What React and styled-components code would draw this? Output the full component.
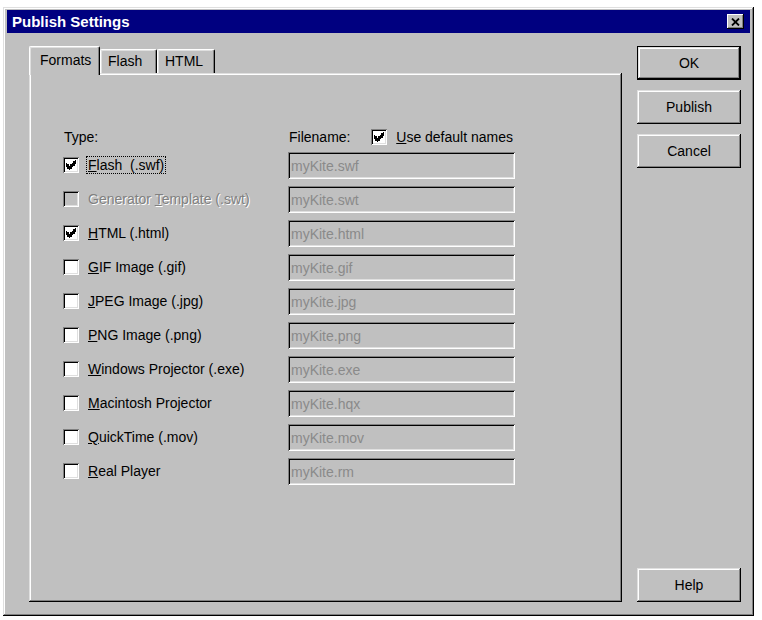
import React from "react";
import styled, { createGlobalStyle } from "styled-components";

const GlobalStyle = createGlobalStyle`
  html, body {
    margin: 0;
    background: #ffffff;
  }
  body {
    font-family: "Liberation Sans", Arial, sans-serif;
    font-size: 14px;
    color: #000;
  }
  #root {
    padding: 7px 0 0 3px;
  }
`;

const raised = `
  box-shadow: inset -1px -1px #000, inset 1px 1px #dfdfdf,
    inset -2px -2px #808080, inset 2px 2px #fff;
`;

const sunken = `
  box-shadow: inset 1px 1px #808080, inset -1px -1px #fff,
    inset 2px 2px #000, inset -2px -2px #dfdfdf;
`;

const Window = styled.div`
  width: 751px;
  height: 609px;
  box-sizing: border-box;
  padding: 3px 4px;
  background: #c0c0c0;
  display: flex;
  flex-direction: column;
  ${raised}
`;

const TitleBar = styled.div`
  height: 23px;
  background: #000080;
  color: #fff;
  display: flex;
  align-items: center;
  justify-content: space-between;
  padding: 0 6px 0 5px;
  font-weight: bold;
  font-size: 15px;
`;

const CloseButton = styled.button`
  width: 17px;
  height: 15px;
  padding: 0;
  border: none;
  background: #c0c0c0;
  display: flex;
  align-items: center;
  justify-content: center;
  box-shadow: inset -1px -1px #000, inset 1px 1px #fff, inset -2px -2px #808080;
`;

const Body = styled.div`
  flex: 1;
  display: flex;
  gap: 15px;
  padding: 13px 9px 11px 22px;
`;

const LeftColumn = styled.div`
  width: 593px;
  display: flex;
  flex-direction: column;
`;

const TabStrip = styled.div`
  height: 27px;
  display: flex;
  align-items: flex-end;
  position: relative;
  z-index: 1;
`;

const Tab = styled.div`
  box-sizing: border-box;
  width: ${(p) => p.$width}px;
  height: ${(p) => (p.$active ? "29px" : "24px")};
  margin-bottom: ${(p) => (p.$active ? "-2px" : "0")};
  padding: ${(p) => (p.$active ? "5px 0 0 10px" : "3px 0 0 7px")};
  background: #c0c0c0;
  border-top: 1px solid #fff;
  border-left: 1px solid #fff;
  border-right: 1px solid #000;
  border-radius: 2px 2px 0 0;
  box-shadow: inset -1px 0 #808080, inset 1px 1px #dfdfdf;
  font-size: 14px;
  line-height: 17px;
`;

const Panel = styled.div`
  flex: 1;
  box-sizing: border-box;
  padding: 53px 0 0 34px;
  ${raised}
`;

const FormatGrid = styled.div`
  display: grid;
  grid-template-columns: 225px 227px;
  grid-template-rows: 22px repeat(10, 34px);
  align-items: center;
`;

const HeaderCell = styled.div`
  display: flex;
  align-items: center;
  padding-left: 1px;
`;

const FilenameLabel = styled.span`
  width: 91px;
`;

const CheckRow = styled.div`
  display: flex;
  align-items: center;
  gap: 7px;
`;

const Box = styled.span`
  width: 16px;
  height: 16px;
  box-sizing: border-box;
  flex-shrink: 0;
  display: flex;
  align-items: center;
  justify-content: center;
  background: ${(p) => (p.$disabled ? "#c0c0c0" : "#fff")};
  ${sunken}
`;

const Label = styled.span`
  padding: 0 1px;
  line-height: 16px;
  border: 1px ${(p) => (p.$focused ? "dotted #000" : "solid transparent")};
  color: ${(p) => (p.$disabled ? "#808080" : "#000")};
  text-shadow: ${(p) => (p.$disabled ? "1px 1px #fff" : "none")};
  white-space: pre;
`;

const FileField = styled.input`
  width: 227px;
  height: 27px;
  box-sizing: border-box;
  margin: 0;
  border: none;
  padding: 2px 0 0 3px;
  background: #c0c0c0;
  font-family: "Liberation Sans", Arial, sans-serif;
  font-size: 14px;
  color: #8a8a8a;
  -webkit-text-fill-color: #8a8a8a;
  opacity: 1;
  ${sunken}
`;

const ButtonColumn = styled.div`
  width: 104px;
  display: flex;
  flex-direction: column;
  gap: 10px;
`;

const Button = styled.button`
  height: 34px;
  box-sizing: border-box;
  padding: 0;
  border: ${(p) => (p.$default ? "1px solid #000" : "none")};
  background: #c0c0c0;
  font-family: "Liberation Sans", Arial, sans-serif;
  font-size: 14px;
  color: #000;
  margin-top: ${(p) => (p.$bottom ? "auto" : "0")};
  ${raised}
`;

function CheckMark() {
  return (
    <svg width="10" height="10" viewBox="0 0 7 7" shapeRendering="crispEdges">
      <path
        fill="#000"
        d="M6 0h1v1h-1z M5 1h2v1h-2z M0 2h1v1h-1z M4 2h3v1h-3z M0 3h2v1h-2z M3 3h3v1h-3z M0 4h5v1h-5z M1 5h3v1h-3z M2 6h1v1h-1z"
      />
    </svg>
  );
}

function CheckBox({ checked, disabled }) {
  return <Box $disabled={disabled}>{checked && <CheckMark />}</Box>;
}

const formats = [
  { key: "F", rest: "lash  (.swf)", file: "myKite.swf", checked: true, focused: true },
  { pre: "Generator ", key: "T", rest: "emplate (.swt)", file: "myKite.swt", disabled: true },
  { key: "H", rest: "TML (.html)", file: "myKite.html", checked: true },
  { key: "G", rest: "IF Image (.gif)", file: "myKite.gif" },
  { key: "J", rest: "PEG Image (.jpg)", file: "myKite.jpg" },
  { key: "P", rest: "NG Image (.png)", file: "myKite.png" },
  { key: "W", rest: "indows Projector (.exe)", file: "myKite.exe" },
  { key: "M", rest: "acintosh Projector", file: "myKite.hqx" },
  { key: "Q", rest: "uickTime (.mov)", file: "myKite.mov" },
  { key: "R", rest: "eal Player", file: "myKite.rm" },
];

export default function App() {
  return (
    <>
      <GlobalStyle />
      <Window>
        <TitleBar>
          <span>Publish Settings</span>
          <CloseButton aria-label="Close">
            <svg width="9" height="8" viewBox="0 0 9 8">
              <path d="M1 0.5 L8 7.5 M8 0.5 L1 7.5" stroke="#000" strokeWidth="1.8" />
            </svg>
          </CloseButton>
        </TitleBar>
        <Body>
          <LeftColumn>
            <TabStrip>
              <Tab $active $width={71}>Formats</Tab>
              <Tab $width={57}>Flash</Tab>
              <Tab $width={58}>HTML</Tab>
            </TabStrip>
            <Panel>
              <FormatGrid>
                <HeaderCell>Type:</HeaderCell>
                <HeaderCell>
                  <FilenameLabel>Filename:</FilenameLabel>
                  <CheckRow>
                    <CheckBox checked />
                    <Label>
                      <u>U</u>se default names
                    </Label>
                  </CheckRow>
                </HeaderCell>
                {formats.map((f) => (
                  <React.Fragment key={f.file}>
                    <CheckRow>
                      <CheckBox checked={f.checked} disabled={f.disabled} />
                      <Label $focused={f.focused} $disabled={f.disabled}>
                        {f.pre}
                        <u>{f.key}</u>
                        {f.rest}
                      </Label>
                    </CheckRow>
                    <FileField disabled value={f.file} readOnly />
                  </React.Fragment>
                ))}
              </FormatGrid>
            </Panel>
          </LeftColumn>
          <ButtonColumn>
            <Button $default>OK</Button>
            <Button>Publish</Button>
            <Button>Cancel</Button>
            <Button $bottom>Help</Button>
          </ButtonColumn>
        </Body>
      </Window>
    </>
  );
}
